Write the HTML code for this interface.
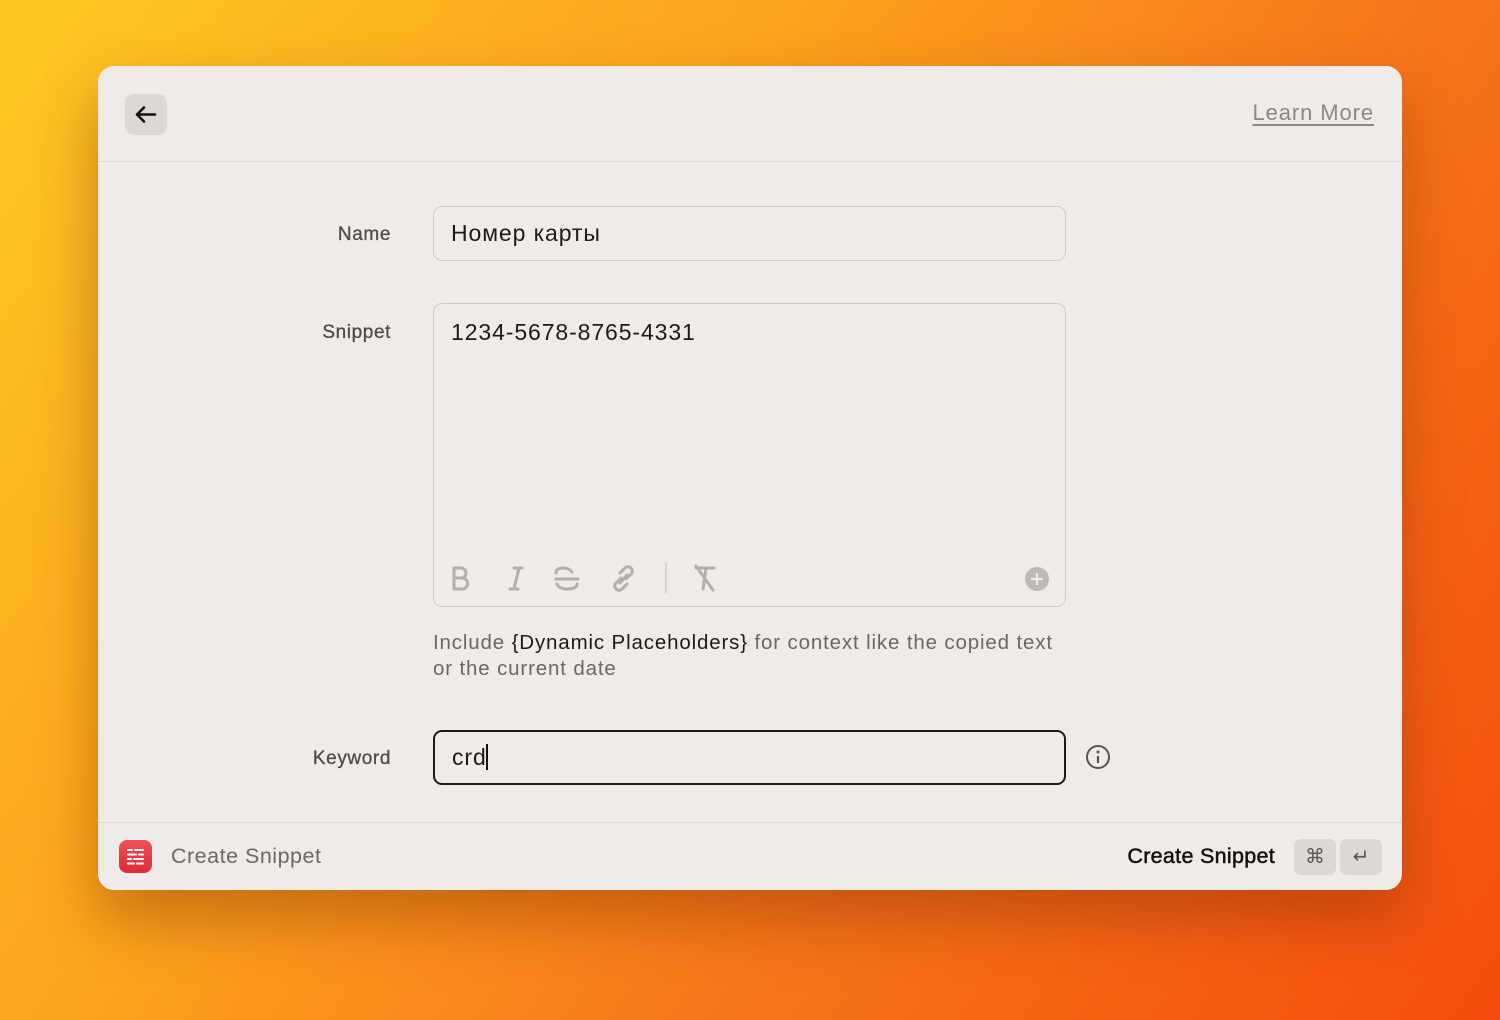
<!DOCTYPE html>
<html><head><meta charset="utf-8"><style>
*{box-sizing:border-box;margin:0;padding:0}
body{width:1500px;height:1020px;overflow:hidden;font-family:"Liberation Sans",sans-serif;
background:linear-gradient(125deg,#fdc823 0%,#fca41c 35%,#f7751a 65%,#f44c0e 100%);position:relative}
.win{position:absolute;left:98px;top:66px;width:1304px;height:824px;background:#f0ebe8;border-radius:16px;
box-shadow:0 30px 60px rgba(120,40,0,.4);overflow:hidden}
.hdr{height:96px;border-bottom:1px solid #dcd7d4;position:relative}
.back{position:absolute;left:27px;top:28px;width:42px;height:41px;background:#dcd8d6;border-radius:9px}
.learn{position:absolute;right:28px;top:34px;font-size:22px;letter-spacing:.9px;color:#8a8785;text-decoration:underline;text-underline-offset:4px}
.lbl{position:absolute;right:1011px;font-size:19px;letter-spacing:.6px;color:#4e4b49;text-align:right;-webkit-text-stroke:.3px #4e4b49}
.box{position:absolute;left:335px;width:633px;border:1.5px solid #cfcac7;border-radius:9px;font-size:23px;letter-spacing:.9px;color:#1d1b1a;padding-left:17px}
.help{position:absolute;left:335px;top:564px;font-size:20.5px;color:#6a6765;line-height:26px;letter-spacing:.85px}
.help b{font-weight:normal;color:#1d1b1a}
.ftr{position:absolute;left:0;top:756px;width:100%;height:68px;border-top:1px solid #dcd7d4}
.key{position:absolute;top:16px;width:42px;height:36px;background:#dcd8d6;border-radius:7px;color:#5a5755;font-size:20px;text-align:center;line-height:36px}
</style></head><body>
<div class="win">
 <div class="hdr">
  <div class="back"><svg width="42" height="41" viewBox="0 0 42 41"><path d="M12 20.5H30M12 20.5L19 13.5M12 20.5L19 27.5" stroke="#111" stroke-width="2.6" fill="none" stroke-linecap="round" stroke-linejoin="round"/></svg></div>
  <div class="learn">Learn More</div>
 </div>
 <div class="lbl" style="top:158px">Name</div>
 <div class="box" style="top:140px;height:55px;line-height:53px">Номер карты</div>
 <div class="lbl" style="top:256px">Snippet</div>
 <div class="box" style="top:237px;height:304px;padding-top:14px;line-height:28px">1234-5678-8765-4331
  <svg style="position:absolute;left:0;top:250px" width="630" height="50" viewBox="0 0 630 50">
   <g fill="none" stroke="#b3afac" stroke-width="3" stroke-linecap="round" stroke-linejoin="round">
    <path d="M20 14v21h8a5 5 0 0 0 0-11h-8M20 14h7a5 5 0 0 1 0 10"/>
    <path d="M80 14h8M76 35h8M85 14l-5 21"/>
    <path d="M138 18q-3-4-9-4q-7 0-7 5M122 25h22M143 30q0 5-10 5q-8 0-10-5"/>
    <path d="M187 24l-5 5a4 4 0 0 0 6 6l5-5M192 25l5-5a4 4 0 0 0-6-6l-5 5M186 29l7-8"/>
    <path d="M262 14h18M272 14l-3 21M262 12l17 24"/>
   </g>
   <path d="M232 8v31" stroke="#d0cbc8" stroke-width="1.5"/>
   <circle cx="603" cy="25" r="12" fill="#bdb9b6"/><path d="M603 19v12M597 25h12" stroke="#f0ebe8" stroke-width="2.2"/>
  </svg>
 </div>
 <div class="help">Include <b>{Dynamic Placeholders}</b> for context like the copied text<br>or the current date</div>
 <div class="lbl" style="top:682px">Keyword</div>
 <div class="box" style="top:664px;height:55px;line-height:51px;border:2px solid #1d1b1a">crd<span style="display:inline-block;width:2px;height:26px;background:#111;vertical-align:-5px;margin-left:-1px"></span></div>
 <svg style="position:absolute;left:987px;top:678px" width="26" height="26" viewBox="0 0 26 26"><circle cx="13" cy="13" r="11" fill="none" stroke="#555" stroke-width="2"/><circle cx="13" cy="8" r="1.5" fill="#555"/><path d="M13 12v7" stroke="#555" stroke-width="2.2"/></svg>
 <div class="ftr">
  <div style="position:absolute;left:21px;top:17px;width:33px;height:33px;border-radius:8px;background:linear-gradient(#f0505a,#dc2c36)">
   <svg width="33" height="33" viewBox="0 0 33 33"><g stroke="#fff" stroke-width="2" stroke-linecap="round"><path d="M9 10h4M16 10h8M9 14.5h8M20 14.5h4M9 19h3M15 19h9M9 23.5h6M18 23.5h6"/></g></svg>
  </div>
  <div style="position:absolute;left:73px;top:21px;font-size:21.5px;letter-spacing:.5px;color:#6a6765">Create Snippet</div>
  <div style="position:absolute;right:127px;top:21px;font-size:21.5px;letter-spacing:.3px;color:#111;-webkit-text-stroke:.5px #111">Create Snippet</div>
  <div class="key" style="right:66px">⌘</div>
  <div class="key" style="right:20px">↵</div>
 </div>
</div>
</body></html>
